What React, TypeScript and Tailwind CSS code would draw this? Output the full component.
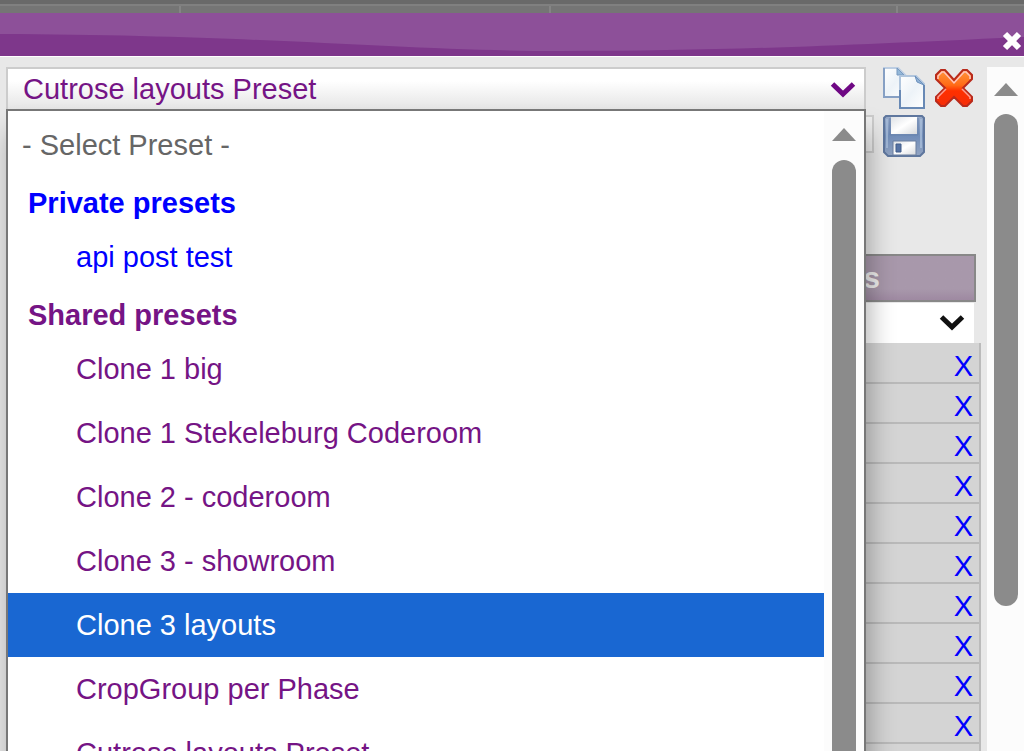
import { useState } from "react";

type Option = { label: string; kind: "none" | "group" | "item"; shared?: boolean };

const options: Option[] = [
  { label: "- Select Preset -", kind: "none" },
  { label: "Private presets", kind: "group" },
  { label: "api post test", kind: "item" },
  { label: "Shared presets", kind: "group", shared: true },
  { label: "Clone 1 big", kind: "item", shared: true },
  { label: "Clone 1 Stekeleburg Coderoom", kind: "item", shared: true },
  { label: "Clone 2 - coderoom", kind: "item", shared: true },
  { label: "Clone 3 - showroom", kind: "item", shared: true },
  { label: "Clone 3 layouts", kind: "item", shared: true },
  { label: "CropGroup per Phase", kind: "item", shared: true },
  { label: "Cutrose layouts Preset", kind: "item", shared: true },
];

const rows = Array.from({ length: 10 }, (_, i) => i + 1);

function Chevron({ className }: { className: string }) {
  return (
    <svg viewBox="0 0 26 18" className={className} fill="none" stroke="currentColor" strokeWidth="5" aria-hidden="true">
      <path d="M2.5 3 13 13 23.5 3" />
    </svg>
  );
}

function ScrollArrow() {
  return (
    <svg viewBox="0 0 24 13" className="h-[13px] w-6 shrink-0" aria-hidden="true">
      <path d="M12 0 24 13H0Z" fill="#8b8b8b" />
    </svg>
  );
}

function CopyIcon() {
  return (
    <svg viewBox="0 0 42 42" className="size-[42px]" aria-hidden="true">
      <defs>
        <linearGradient id="page" x1="0" y1="0" x2="1" y2="1">
          <stop offset="0" stopColor="#fff" />
          <stop offset="0.5" stopColor="#edf3f8" />
          <stop offset="1" stopColor="#fff" />
        </linearGradient>
      </defs>
      <path d="M1 1H15L23 9V30H1Z" fill="url(#page)" stroke="#bccde2" strokeWidth="2" />
      <path d="M1 1V30H17" fill="none" stroke="#86a0c4" strokeWidth="2" />
      <path d="M14 1V8H21Z" fill="#94b8d9" stroke="#7798bf" />
      <path d="M17 9H33L41 17V41H17Z" fill="url(#page)" stroke="#b0c5dd" strokeWidth="2" />
      <path d="M17 23V41H41V18" fill="none" stroke="#6889b5" strokeWidth="2" />
      <path d="M32 9 34 15 41 18Z" fill="#8fb1d6" stroke="#6e92bd" />
    </svg>
  );
}

function DeleteIcon() {
  return (
    <svg viewBox="0 0 40 40" className="size-10" aria-hidden="true">
      <defs>
        <linearGradient id="red" x1="0" y1="0" x2="0" y2="1">
          <stop offset="0" stopColor="#ff963c" />
          <stop offset="0.42" stopColor="#ff6b16" />
          <stop offset="0.58" stopColor="#ff3000" />
          <stop offset="1" stopColor="#f52d08" />
        </linearGradient>
      </defs>
      <path
        d="M7 2H11L20 12 29 2H33L38 7V11L29 20 38 29V33L33 38H29L20 29 11 38H7L2 33V29L11 20 2 11V7Z"
        fill="url(#red)"
        stroke="#b92a1b"
        strokeWidth="2"
      />
      <path d="M4 11V8L8 4H10L20 15 30 4H32L36 8V11" fill="none" stroke="#ffc4bd" strokeWidth="1.5" />
      <path d="M12 21 4 29V31M28 21 36 29V31" fill="none" stroke="#ff9e91" strokeWidth="1.5" />
    </svg>
  );
}

function SaveIcon() {
  return (
    <svg viewBox="0 0 42 42" className="size-[42px]" aria-hidden="true">
      <defs>
        <linearGradient id="disk" x1="0" y1="0" x2="0" y2="1">
          <stop offset="0" stopColor="#9aacca" />
          <stop offset="0.5" stopColor="#718db9" />
          <stop offset="1" stopColor="#92a4c2" />
        </linearGradient>
        <linearGradient id="label" x1="0" y1="0" x2="1" y2="1">
          <stop offset="0" stopColor="#dfe2e6" />
          <stop offset="0.5" stopColor="#fff" />
          <stop offset="1" stopColor="#d8dadd" />
        </linearGradient>
      </defs>
      <path d="M3 1H39L41 3V37L37 41H5L1 37V3Z" fill="url(#disk)" stroke="#5f779e" strokeWidth="2" />
      <path d="M4 4V33M38 4V33" stroke="#abc0dc" strokeWidth="1.5" />
      <path d="M8 2H34V19H8Z" fill="url(#label)" />
      <path d="M7 3V20H35V3" fill="none" stroke="#6781ab" />
      <path d="M10 26H33V40H10Z" fill="url(#label)" stroke="#6a7f9f" />
      <path d="M13 29H18V37H13Z" fill="#5673a4" stroke="#405c89" />
    </svg>
  );
}

function PresetList({ active, onPick }: { active: string; onPick: (label: string) => void }) {
  return (
    <div className="absolute top-[42px] right-0 left-0 z-10 flex border-2 border-[#777] bg-white shadow-[4px_22px_24px_rgba(0,0,0,0.3)]">
      <div role="listbox" aria-label="Presets" className="flex min-w-0 flex-1 flex-col pt-[2px]">
        {options.map((option) => {
          if (option.kind === "group") {
            return (
              <div
                key={option.label}
                className={`flex h-12 items-center pt-1 pl-5 font-bold ${option.shared ? "text-[#751485]" : "text-[#0000ff]"}`}
              >
                {option.label}
              </div>
            );
          }
          const selected = option.label === active;
          const indent = option.kind === "none" ? "pl-[14px]" : "pl-[68px]";
          const ink = option.kind === "none" ? "text-[#666]" : option.shared ? "text-[#751485]" : "text-[#0000ff]";
          return (
            <button
              key={option.label}
              type="button"
              role="option"
              aria-selected={selected}
              onClick={() => onPick(option.label)}
              className={`h-16 text-left ${indent} ${selected ? "bg-[#1967d2] text-white" : ink}`}
            >
              {option.label}
            </button>
          );
        })}
      </div>
      <div className="flex w-10 shrink-0 flex-col items-center gap-[19px] bg-[#fcfcfc] pt-[17px]">
        <ScrollArrow />
        <div className="w-6 flex-1 rounded-t-full bg-[#8b8b8b]" />
      </div>
    </div>
  );
}

export default function App() {
  const [active, setActive] = useState("Clone 3 layouts");

  return (
    <main className="flex h-screen flex-col overflow-hidden bg-[#e8e8e8] font-['Liberation_Sans',Arial,sans-serif] text-[29px] leading-8">
      <div className="flex h-[13px] shrink-0 flex-col bg-[#757575]">
        <div className="h-1 bg-[#696969]" />
        <div className="grid flex-1 grid-cols-[181fr_370fr_347fr_126fr] border-t-2 border-[#808080]">
          <span className="border-r-2 border-[#858585]" />
          <span className="border-r-2 border-[#858585]" />
          <span className="border-r-2 border-[#858585]" />
        </div>
      </div>

      <header className="relative flex h-[43px] shrink-0 items-end justify-end bg-[#7e378b]">
        <svg viewBox="0 0 1024 43" preserveAspectRatio="none" className="absolute inset-0 size-full" aria-hidden="true">
          <path d="M0 0H1024V24C850 32 730 38 560 38 400 38 270 22 0 21Z" fill="#8d5099" />
        </svg>
        <button type="button" aria-label="Close" className="relative mr-[2px] mb-[5px] text-white">
          <svg viewBox="0 0 20 20" className="size-5" stroke="currentColor" strokeWidth="6" aria-hidden="true">
            <path d="M3 3 17 17M17 3 3 17" />
          </svg>
        </button>
      </header>

      <div className="flex min-h-0 flex-1 border-t border-white pt-[10px]">
        <section className="flex min-w-0 flex-1 flex-col pl-[6px]">
          <div className="flex shrink-0 gap-[9px] pr-[13px]">
            <div className="relative mr-2 h-11 min-w-0 flex-1">
              <select
                aria-label="Preset"
                defaultValue="Cutrose layouts Preset"
                className="h-11 w-full appearance-none border-2 border-[#ccc] bg-linear-to-b from-white from-30% to-[#e5e5e5] pl-[15px] text-[#751485]"
              >
                <option>Cutrose layouts Preset</option>
              </select>
              <Chevron className="pointer-events-none absolute top-[14px] right-[10px] h-[18px] w-[26px] text-[#6f0884]" />
              <PresetList active={active} onPick={setActive} />
            </div>
            <button type="button" aria-label="Copy preset" className="size-[42px] shrink-0">
              <CopyIcon />
            </button>
            <button type="button" aria-label="Delete preset" className="size-10 shrink-0 pt-[1px]">
              <DeleteIcon />
            </button>
          </div>

          <div className="mt-1 flex shrink-0 items-start gap-[9px] pr-[62px]">
            <input aria-label="Preset name" className="h-[38px] min-w-0 flex-1 border-2 border-[#ccc] bg-[#eee]" />
            <button type="button" aria-label="Save preset" className="size-[42px] shrink-0">
              <SaveIcon />
            </button>
          </div>

          <div className="mt-[97px] mr-[11px] flex h-12 shrink-0 items-center justify-end border-2 border-[#888] bg-linear-to-b from-[#a898ab] from-75% to-[#9e89a1] pr-[94px] font-bold text-[#eee]">
            s
          </div>
          <div className="relative mt-[1px] mr-[13px] h-10 shrink-0">
            <select aria-label="Column" className="block size-full appearance-none bg-white">
              <option></option>
            </select>
            <Chevron className="pointer-events-none absolute top-[11px] right-[9px] h-[18px] w-[26px] text-[#111]" />
          </div>
          <ul className="mr-[6px] flex-1 border-r-2 border-[#bbb] bg-[#d4d4d4] pt-[1px]">
            {rows.map((row) => (
              <li key={row} className="flex h-10 items-center justify-end border-b-2 border-[#b9b9b9] pt-[6px] pr-[6px]">
                <button type="button" aria-label={`Remove row ${row}`} className="text-[#0000ff]">
                  X
                </button>
              </li>
            ))}
          </ul>
        </section>

        <div className="flex w-[37px] shrink-0 flex-col items-center gap-[18px] bg-[#fcfcfc] pt-4">
          <ScrollArrow />
          <div className="mb-[145px] w-6 flex-1 rounded-full bg-[#8b8b8b]" />
        </div>
      </div>
    </main>
  );
}
